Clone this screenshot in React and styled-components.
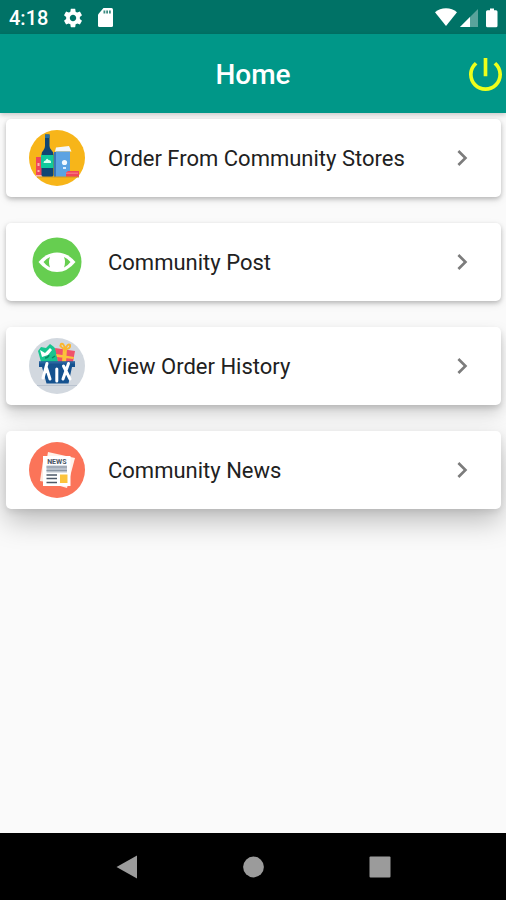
import React from "react";
import styled, { createGlobalStyle } from "styled-components";

const menu = [
  { title: "Order From Community Stores", icon: StoreIcon, level: "low" },
  { title: "Community Post", icon: EyeIcon, level: "low" },
  { title: "View Order History", icon: BasketIcon, level: "mid" },
  { title: "Community News", icon: NewsIcon, level: "high" },
];

const App = () => {
  return (
    <Page>
      <GlobalStyle />
      <StatusBar>
        <StatusGroup $gap="14px">
          <Clock>4:18</Clock>
          <GearIcon />
          <SdCardIcon />
        </StatusGroup>
        <StatusGroup $gap="3px">
          <WifiIcon />
          <SignalIcon />
          <BatteryIcon />
        </StatusGroup>
      </StatusBar>
      <AppBar>
        <h1>Home</h1>
        <PowerButton type="button" aria-label="Log out">
          <svg width="33" height="33" viewBox="3 3 18 18" fill="currentColor">
            <path d="M13 3h-2v10h2V3zm4.83 2.17l-1.42 1.42C17.99 7.86 19 9.81 19 12c0 3.87-3.13 7-7 7s-7-3.13-7-7c0-2.19 1.01-4.14 2.58-5.42L6.17 5.17C4.23 6.82 3 9.26 3 12c0 4.97 4.03 9 9 9s9-4.03 9-9c0-2.74-1.23-5.18-3.17-6.83z" />
          </svg>
        </PowerButton>
      </AppBar>
      <MenuList>
        {menu.map(({ title, icon: Icon, level }) => (
          <MenuCard href="#" key={title} $level={level}>
            <Icon />
            <span>{title}</span>
            <svg width="32" height="32" viewBox="0 0 24 24" fill="#7c7c7c">
              <path d="M10 6L8.59 7.41 13.17 12l-4.58 4.59L10 18l6-6z" />
            </svg>
          </MenuCard>
        ))}
      </MenuList>
      <NavBar>
        <button type="button" aria-label="Back">
          <svg width="24" height="24" viewBox="0 0 24 24">
            <path d="M1.5 12 22 .500v23z" />
          </svg>
        </button>
        <button type="button" aria-label="Home screen">
          <svg width="24" height="24" viewBox="0 0 24 24">
            <circle cx="12.500" cy="12" r="10.400" />
          </svg>
        </button>
        <button type="button" aria-label="Recent apps">
          <svg width="24" height="24" viewBox="0 0 24 24">
            <rect x="1.5" y="1.5" width="21" height="21" rx="1" />
          </svg>
        </button>
      </NavBar>
    </Page>
  );
};

//Status bar icons
function GearIcon() {
  return (
    <svg width="22" height="22" viewBox="0 0 24 24" fill="#fff">
      <path d="M19.43 12.98c.04-.32.07-.64.07-.98s-.03-.66-.07-.98l2.11-1.65c.19-.15.24-.42.12-.64l-2-3.46c-.12-.22-.39-.3-.61-.22l-2.49 1c-.52-.4-1.08-.73-1.69-.98l-.38-2.65C14.46 2.18 14.25 2 14 2h-4c-.25 0-.46.18-.49.42l-.38 2.65c-.61.25-1.17.59-1.69.98l-2.49-1c-.23-.09-.49 0-.61.22l-2 3.46c-.13.22-.07.49.12.64l2.11 1.65c-.04.32-.07.65-.07.98s.03.66.07.98l-2.11 1.65c-.19.15-.24.42-.12.64l2 3.46c.12.22.39.3.61.22l2.49-1c.52.4 1.08.73 1.69.98l.38 2.65c.03.24.24.42.49.42h4c.25 0 .46-.18.49-.42l.38-2.65c.61-.25 1.17-.59 1.69-.98l2.49 1c.23.09.49 0 .61-.22l2-3.46c.12-.22.07-.49-.12-.64l-2.11-1.65zM12 15.5c-1.93 0-3.5-1.57-3.5-3.5s1.57-3.5 3.5-3.5 3.5 1.57 3.5 3.5-1.57 3.5-3.5 3.5z" />
    </svg>
  );
}

function SdCardIcon() {
  return (
    <svg width="15" height="19" viewBox="0 0 15 19">
      <path
        d="M5.5 0h8A1.5 1.5 0 0 1 15 1.5v16a1.5 1.5 0 0 1-1.5 1.5h-12A1.5 1.5 0 0 1 0 17.5v-11z"
        fill="#fff"
      />
      <path d="M5.5 2.500h1.800v3H5.500zM8.200 2.500H10v3H8.200zM11 2.500h1.800v3H11z" fill="#3d8b81" />
    </svg>
  );
}

function WifiIcon() {
  return (
    <svg width="22" height="19" viewBox="0 0 22 19" fill="#fff">
      <path d="M0 4.3C3 1.8 6.8.3 11 .3s8 1.5 11 4L11 18z" />
    </svg>
  );
}

function SignalIcon() {
  return (
    <svg width="18" height="19" viewBox="0 0 18 19" fill="#fff">
      <path d="M18 1v18H0z" opacity=".35" />
      <path d="M10 9v10H0z" />
    </svg>
  );
}

function BatteryIcon() {
  return (
    <svg width="22" height="20" viewBox="0 0 22 20" fill="#fff">
      <path d="M9 .5h4v1.700h2q1.500 0 1.500 1.500v14q0 1.500-1.500 1.500H6.500q-1.500 0-1.500-1.500v-14q0-1.500 1.500-1.500H9z" />
    </svg>
  );
}

//Menu icons
function StoreIcon() {
  return (
    <svg width="58" height="58" viewBox="0 0 58 58">
      <circle cx="29" cy="29" r="28" fill="#f7b519" />
      <path d="M8 28h6v20H8z" fill="#f0455c" />
      <path d="M9.5 34h2v3h-2zM9.5 41h2v2h-2zM8 46h6v2H8z" fill="#f9b7ad" />
      <path
        d="M17 5.5h4.5V17q0 2.500 2.200 4.500 1.800 1.500 1.800 4V46q0 2-2 2h-8q-2 0-2-2V25.500q0-2.500 1.800-4Q17 19.500 17 17z"
        fill="#104673"
      />
      <path d="M17 5.5h4.5V9H17z" fill="#2b6f9f" />
      <path d="M13 26h12.5v13H13z" fill="#11c99c" />
      <path d="M15.5 34q0-2.500 2-2.500 1.500-3 3-.5 3 0 2.500 3z" fill="#d6fff0" />
      <path d="m28 18.500 13-1.500 2.500 5.500H27z" fill="#f4f7fa" />
      <path d="M26 23h4v25h-4z" fill="#3977ba" />
      <path d="M28 22.500h14V48H28z" fill="#5ba3e2" />
      <circle cx="36.5" cy="33.500" r="2.600" fill="#f4faff" />
      <path d="M35 38h3v2h-3z" fill="#d9ecff" />
      <path d="M38 43.5 40 42h11v6H38z" fill="#f0455c" />
      <path d="M38 43.5h12V45H38z" fill="#f8717b" />
      <path d="M9 48h42" stroke="#d29a21" />
    </svg>
  );
}

function EyeIcon() {
  return (
    <svg width="58" height="58" viewBox="0 0 58 58">
      <circle cx="29" cy="29" r="24.5" fill="#66ce50" />
      <path d="M10.500 29q8-9.500 18.500-9.500T47.500 29q-8 10-18.500 10T10.500 29z" fill="#fff" />
      <path d="M15.5 29q3-3.500 6.500-5-2 5 0 10.500-4-2-6.500-5.500z" fill="#66ce50" />
      <path d="M42.500 29q-3-3.500-6.500-5 2 5 0 10.500 4-2 6.500-5.500z" fill="#66ce50" />
    </svg>
  );
}

function BasketIcon() {
  return (
    <svg width="58" height="58" viewBox="0 0 58 58">
      <circle cx="29" cy="29" r="28" fill="#d2d8df" />
      <path d="m10 14 3-4 5 1 4-4 4 3 3 4 1 11H13z" fill="#18c58f" />
      <path d="m12 13 5 3 5-5 2 2-4 5-6 2z" fill="#fff" />
      <path d="M17 21q3 0 4-3M24 21l3-2" fill="none" stroke="#078963" strokeWidth="1.5" />
      <path d="m27 11 20 3-2 11H30z" fill="#f0526a" />
      <path d="m35 11 4 1-1 13h-4zM28 17l18 3-.5 2L29 20z" fill="#fbc23b" />
      <path
        d="M37 12q-6-2-4-5 3-1 4 5 3-6 5-4 1 4-5 4z"
        fill="none"
        stroke="#fbb52d"
        strokeWidth="2"
      />
      <path d="M11 24.5h36V30h-3l-3.500 16.500h-22L14 30h-3z" fill="#15528f" />
      <path d="M11 24.5h36v2H11z" fill="#2a649f" />
      <path
        d="M19 26.500 15 41M18.500 31 22 42M40.500 26.500 35 42M35.500 29 42 42M28.800 32v12"
        fill="none"
        stroke="#fff"
        strokeWidth="3"
        strokeLinecap="round"
      />
      <path d="M9 48.500h40" stroke="#b9c2ce" />
    </svg>
  );
}

function NewsIcon() {
  return (
    <svg width="58" height="58" viewBox="0 0 58 58">
      <circle cx="29" cy="29" r="28" fill="#fb7459" />
      <path d="m20 11 27 6-8 30-24-7z" fill="#fff1e9" />
      <path d="m12 40 3-20h20v24z" fill="#ffe9df" />
      <path d="M15 15h27.500v30H15z" fill="#fff" />
      <text
        x="28.8"
        y="22.500"
        textAnchor="middle"
        fontFamily="Roboto, sans-serif"
        fontSize="7"
        fontWeight="700"
        fill="#4a5563"
      >
        NEWS
      </text>
      <path d="M18.500 24.500H39v7H18.500z" fill="#b9c1cb" />
      <path d="M18.500 26H39M18.500 29.500H39" stroke="#8b96a4" />
      <path d="M18.500 34H29M18.500 37.500H29M18.500 41.500H29" stroke="#4d5968" strokeWidth="1.5" />
      <path d="M32 33.500h7.500v8.500H32z" fill="#fcc43c" />
    </svg>
  );
}

const GlobalStyle = createGlobalStyle`
  * {
    box-sizing: border-box;
  }
  body {
    margin: 0;
    background: #fafafa;
    font-family: Roboto, sans-serif;
  }
  button {
    padding: 0;
    border: none;
    background: none;
    cursor: pointer;
  }
  svg {
    display: block;
    flex: none;
  }
`;

const shadows = {
  low: "0 2px 4px rgba(0, 0, 0, 0.2), 0 3px 8px rgba(0, 0, 0, 0.1)",
  mid: "0 3px 5px rgba(0, 0, 0, 0.12), 0 8px 16px rgba(0, 0, 0, 0.18)",
  high: "0 3px 6px rgba(0, 0, 0, 0.08), 0 12px 28px rgba(0, 0, 0, 0.25)",
};

const Page = styled.div`
  display: flex;
  flex-direction: column;
  min-height: 100vh;
`;

const StatusBar = styled.div`
  display: flex;
  align-items: center;
  justify-content: space-between;
  height: 34px;
  padding: 1px 3px 0 9px;
  background: #007266;
`;

const StatusGroup = styled.div`
  display: flex;
  align-items: center;
  gap: ${(props) => props.$gap};
`;

const Clock = styled.span`
  font-size: 20px;
  font-weight: 500;
  color: #fff;
`;

const AppBar = styled.header`
  display: grid;
  grid-template-columns: 1fr auto 1fr;
  align-items: center;
  height: 79px;
  padding: 2px 4px 0;
  background: #009788;
  box-shadow: 0 2px 5px rgba(0, 0, 0, 0.2);
  h1 {
    grid-column: 2;
    margin: 0;
    font-size: 28px;
    font-weight: 500;
    color: #fff;
  }
`;

const PowerButton = styled.button`
  justify-self: end;
  color: #eeff1b;
`;

const MenuList = styled.main`
  display: flex;
  flex: 1;
  flex-direction: column;
  gap: 26px;
  padding: 6px 5px 24px 6px;
`;

const MenuCard = styled.a`
  display: flex;
  align-items: center;
  height: 78px;
  padding: 0 23px 0 22px;
  border-radius: 5px;
  background: #fff;
  box-shadow: ${(props) => shadows[props.$level]};
  color: #212121;
  text-decoration: none;
  span {
    flex: 1;
    margin-left: 22px;
    font-size: 22px;
  }
`;

const NavBar = styled.nav`
  display: grid;
  grid-template-columns: repeat(3, 1fr);
  justify-items: center;
  align-items: center;
  height: 67px;
  padding: 0 12.5%;
  background: #000;
  svg {
    fill: #9b9b9b;
  }
`;

export default App;
